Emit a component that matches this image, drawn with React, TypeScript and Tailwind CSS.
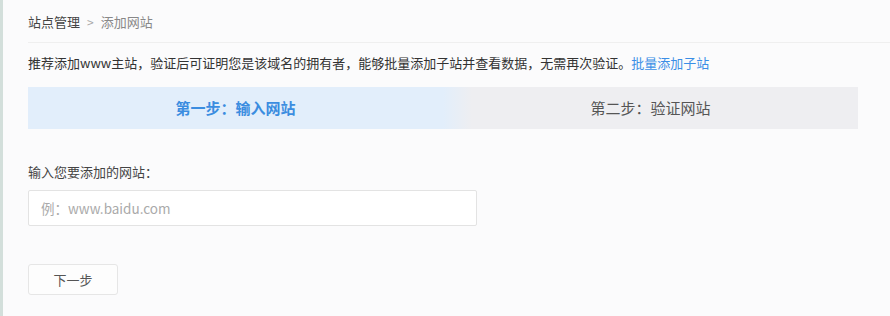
import React from "react";

export default function App() {
  return (
    <div
      className="w-[890px] h-[316px] bg-[#fbfbfc] border-l-[3px] border-[#d3dfdb] overflow-hidden text-[13px] text-[#333]"
      style={{ fontFamily: '"Noto Sans CJK SC", "Noto Sans", sans-serif' }}
    >
      <div className="pl-[25px]">
        <div className="h-[43px] flex items-center border-b border-[#efefef] pt-[2px]">
          <span className="text-[#444]">站点管理</span>
          <span className="mx-[7px] text-[#aaa] text-[12px]">&gt;</span>
          <span className="text-[#888]">添加网站</span>
        </div>
        <div className="h-[38px] flex items-center pt-[1px]">
          <span className="text-[#333]">
            推荐添加www主站，验证后可证明您是该域名的拥有者，能够批量添加子站并查看数据，无需再次验证。
          </span>
          <span className="text-[#3a8ee6]">批量添加子站</span>
        </div>
        <div className="mt-[6px] w-[830px] h-[42px] grid grid-cols-2 bg-[linear-gradient(to_right,#e2eefb_0%,#e2eefb_50%,#eeeef1_53.5%,#eeeef1_100%)]">
          <div className="flex items-center justify-center text-[15px] font-bold text-[#3b8de0]">
            第一步：输入网站
          </div>
          <div className="flex items-center justify-center text-[15px] text-[#555]">
            第二步：验证网站
          </div>
        </div>
        <div className="mt-[33px] h-[20px] flex items-center text-[#444]">
          输入您要添加的网站：
        </div>
        <div className="mt-[8px] w-[449px] h-[36px] border border-[#e3e3e3] bg-white rounded-[2px] flex items-center pl-[12px] text-[13.5px] text-[#aaa]">
          例：www.baidu.com
        </div>
        <div className="mt-[38px] w-[90px] h-[31px] border border-[#e6e6e6] rounded-[3px] bg-[#fdfdfd] flex items-center justify-center text-[#555]">
          下一步
        </div>
      </div>
    </div>
  );
}
